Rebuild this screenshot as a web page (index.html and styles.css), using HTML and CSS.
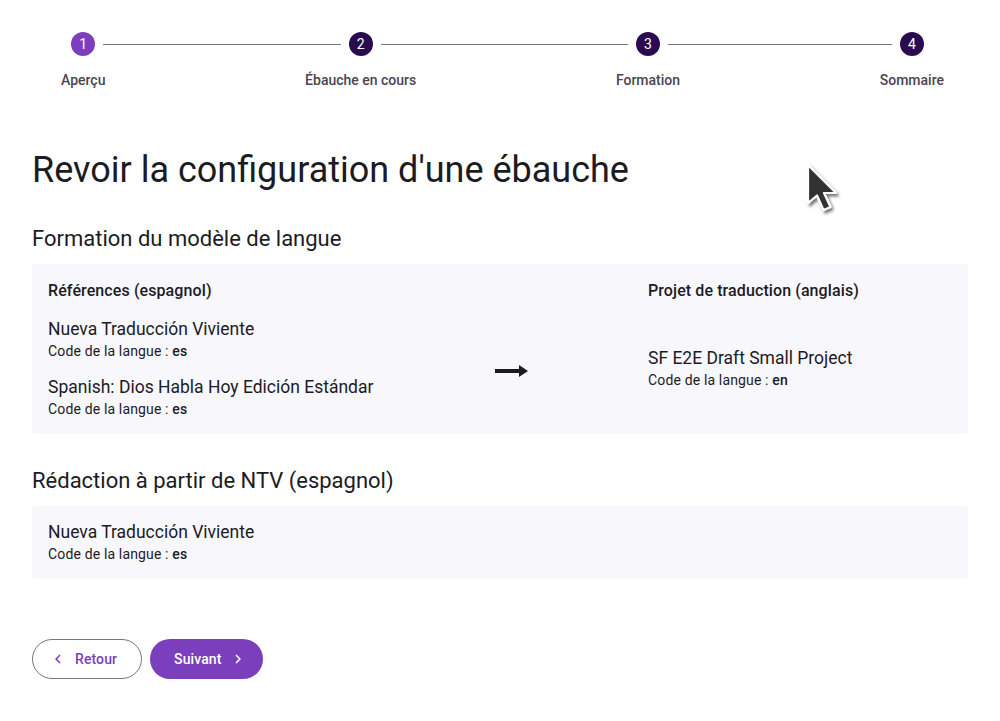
FILE: index.html
```html
<!DOCTYPE html>
<html lang="fr">
<head>
<meta charset="utf-8">
<title>Revoir la configuration d'une ébauche</title>
<link rel="stylesheet" href="styles.css">
</head>
<body>
<div class="page">
  <nav class="stepper">
    <div class="step first">
      <div class="step-top"><span class="half"></span><span class="dot dot-active">1</span><span class="half"></span></div>
      <span class="step-label">Aperçu</span>
    </div>
    <span class="connector"></span>
    <div class="step">
      <div class="step-top"><span class="half"></span><span class="dot">2</span><span class="half"></span></div>
      <span class="step-label">Ébauche en cours</span>
    </div>
    <span class="connector"></span>
    <div class="step">
      <div class="step-top"><span class="half"></span><span class="dot">3</span><span class="half"></span></div>
      <span class="step-label">Formation</span>
    </div>
    <span class="connector"></span>
    <div class="step last">
      <div class="step-top"><span class="half"></span><span class="dot">4</span><span class="half"></span></div>
      <span class="step-label">Sommaire</span>
    </div>
  </nav>

  <h1 class="title">Revoir la configuration d'une ébauche</h1>

  <h2 class="section-title">Formation du modèle de langue</h2>
  <div class="card card-training">
    <div class="col col-left">
      <div class="col-head">Références (espagnol)</div>
      <div class="project">
        <div class="project-name">Nueva Traducción Viviente</div>
        <div class="project-code">Code de la langue : <b>es</b></div>
      </div>
      <div class="project">
        <div class="project-name">Spanish: Dios Habla Hoy Edición Estándar</div>
        <div class="project-code">Code de la langue : <b>es</b></div>
      </div>
    </div>
    <div class="col-arrow">
      <svg width="34" height="14" viewBox="0 0 34 14" aria-hidden="true">
        <rect x="0" y="5" width="27" height="4" fill="#1c1b1f"/>
        <path d="M24 1 L33 7 L24 13 Z" fill="#1c1b1f"/>
      </svg>
    </div>
    <div class="col col-right">
      <div class="col-head">Projet de traduction (anglais)</div>
      <div class="col-center">
        <div class="project">
          <div class="project-name">SF E2E Draft Small Project</div>
          <div class="project-code">Code de la langue : <b>en</b></div>
        </div>
      </div>
    </div>
  </div>

  <h2 class="section-title">Rédaction à partir de NTV (espagnol)</h2>
  <div class="card card-draft">
    <div class="project">
      <div class="project-name">Nueva Traducción Viviente</div>
      <div class="project-code">Code de la langue : <b>es</b></div>
    </div>
  </div>

  <div class="actions">
    <button class="btn btn-outline" type="button">
      <svg width="18" height="18" viewBox="0 0 24 24" aria-hidden="true"><path d="M15.41 7.41 14 6l-6 6 6 6 1.41-1.41L10.83 12z" fill="currentColor"/></svg>
      <span>Retour</span>
    </button>
    <button class="btn btn-filled" type="button">
      <span>Suivant</span>
      <svg width="18" height="18" viewBox="0 0 24 24" aria-hidden="true"><path d="M8.59 16.59 10 18l6-6-6-6-1.41 1.41L13.17 12z" fill="currentColor"/></svg>
    </button>
  </div>

  <svg class="cursor" width="44" height="58" viewBox="0 0 44 58" aria-hidden="true">
    <defs>
      <filter id="sh" x="-30%" y="-30%" width="160%" height="160%">
        <feDropShadow dx="2" dy="2.5" stdDeviation="1.8" flood-color="#000" flood-opacity="0.55"/>
      </filter>
    </defs>
    <path d="M3 2 L3 40 L12 32.5 L18.5 47 L25.5 44 L19 30 L31 30 Z" fill="#333" stroke="#fff" stroke-width="2.2" stroke-linejoin="round" filter="url(#sh)"/>
  </svg>
</div>
</body>
</html>
```

FILE: styles.css
```css
* { box-sizing: border-box; }

html, body {
  margin: 0;
  padding: 0;
  background: #ffffff;
}

body {
  font-family: Roboto, "Noto Sans", Arial, sans-serif;
  color: #1c1b1f;
}

.page {
  position: relative;
  padding: 32px 32px 40px;
}

/* Stepper */
.stepper {
  display: flex;
  align-items: flex-start;
  padding-left: 5px;
}

.step {
  display: flex;
  flex-direction: column;
  align-items: center;
  padding: 0 24px;
}

.step-top {
  display: flex;
  align-items: center;
  align-self: stretch;
  margin: 0 -24px;
  height: 24px;
}

.half {
  flex: 1;
  height: 1px;
  background: #79747e;
}

.dot + .half { margin-left: 8px; }
.half:first-child { margin-right: 8px; }

.first .half:first-child,
.last .half:last-child { background: transparent; }

.connector {
  flex: 1;
  height: 1px;
  margin-top: 12px;
  background: #79747e;
}

.dot {
  width: 24px;
  height: 24px;
  border-radius: 50%;
  background: #2a0c4e;
  color: #ffffff;
  font-size: 14px;
  line-height: 24px;
  text-align: center;
  flex: none;
}

.dot-active { background: #7b3fbd; }

.step-label {
  margin-top: 14px;
  font-size: 14px;
  line-height: 20px;
  font-weight: 500;
  color: #49454f;
  white-space: nowrap;
}

/* Headings */
.title {
  margin: 58px 0 0;
  font-size: 36px;
  line-height: 44px;
  font-weight: 400;
  color: #1c1b1f;
}

.section-title {
  margin: 33px 0 11px;
  font-size: 22px;
  line-height: 28px;
  font-weight: 400;
  color: #1c1b1f;
}

.card + .section-title { margin-top: 33px; }

/* Cards */
.card {
  background: #f8f7fc;
  border-radius: 4px;
  padding: 16px;
}

.card-training {
  display: flex;
  align-items: stretch;
  padding-bottom: 14px;
}

.col {
  display: flex;
  flex-direction: column;
}

.col-left { width: 447px; }

.col-arrow {
  width: 153px;
  display: flex;
  align-items: center;
  padding-top: 41px;
}

.col-arrow svg { display: block; }

.col-right { flex: 1; }

.col-center {
  flex: 1;
  display: flex;
  align-items: center;
}

.col-head {
  font-size: 16px;
  line-height: 22px;
  font-weight: 500;
  letter-spacing: 0.1px;
  color: #1c1b1f;
  margin-bottom: 16px;
}

.project + .project { margin-top: 14px; }

.project-name {
  font-size: 17.5px;
  line-height: 22px;
  color: #1c1b1f;
}

.project-code {
  font-size: 14px;
  line-height: 22px;
  letter-spacing: 0.15px;
  color: #1c1b1f;
}

.project-code b { font-weight: 500; }

.card-draft {
  padding: 15px 16px 14px;
}

/* Buttons */
.actions {
  display: flex;
  gap: 8px;
  margin-top: 60px;
}

.btn {
  display: inline-flex;
  align-items: center;
  gap: 8px;
  height: 40px;
  border-radius: 20px;
  font-family: Roboto, "Noto Sans", Arial, sans-serif;
  font-size: 14px;
  font-weight: 500;
  letter-spacing: 0.1px;
  cursor: pointer;
}

.btn-outline {
  background: #ffffff;
  border: 1px solid #79747e;
  color: #7b3fbd;
  padding: 0 24px 0 16px;
}

.btn-filled {
  background: #7b3fbd;
  border: none;
  color: #ffffff;
  padding: 0 16px 0 24px;
}

.btn svg { display: block; }

.cursor {
  position: absolute;
  left: 805px;
  top: 163px;
}
```
